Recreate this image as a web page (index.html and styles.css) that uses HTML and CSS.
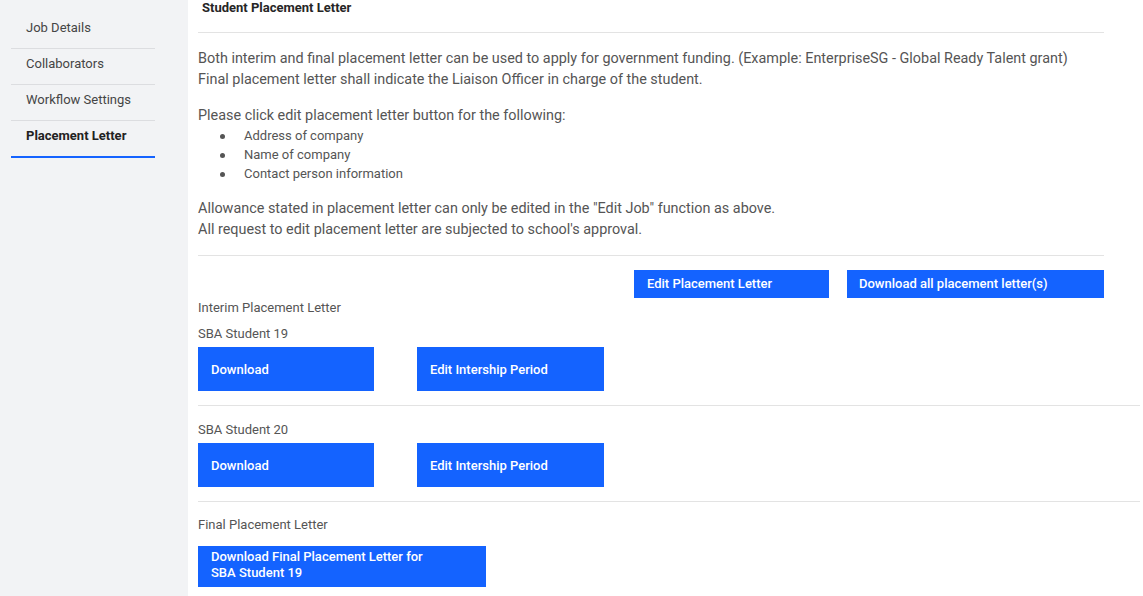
FILE: index.html
```html
<!DOCTYPE html>
<html lang="en">
<head>
<meta charset="utf-8">
<title>Student Placement Letter</title>
<link rel="stylesheet" href="styles.css">
</head>
<body>
<div class="layout">
  <aside class="sidebar">
    <nav class="nav">
      <a class="nav-item">Job Details</a>
      <a class="nav-item">Collaborators</a>
      <a class="nav-item">Workflow Settings</a>
      <a class="nav-item active">Placement Letter</a>
    </nav>
  </aside>
  <main class="main">
    <div class="page-title">Student Placement Letter</div>
    <section class="intro">
      <p class="para">Both interim and final placement letter can be used to apply for government funding. (Example: EnterpriseSG - Global Ready Talent grant)<br>Final placement letter shall indicate the Liaison Officer in charge of the student.</p>
      <p class="para">Please click edit placement letter button for the following:</p>
      <ul class="bullets">
        <li>Address of company</li>
        <li>Name of company</li>
        <li>Contact person information</li>
      </ul>
      <p class="para">Allowance stated in placement letter can only be edited in the "Edit Job" function as above.<br>All request to edit placement letter are subjected to school's approval.</p>
    </section>
    <div class="actions">
      <button class="btn btn-sm btn-edit">Edit Placement Letter</button>
      <button class="btn btn-sm btn-all">Download all placement letter(s)</button>
    </div>
    <div class="label label-interim">Interim Placement Letter</div>
    <section class="student">
      <div class="label">SBA Student 19</div>
      <div class="student-actions">
        <button class="btn btn-lg btn-dl">Download</button>
        <button class="btn btn-lg btn-period">Edit Intership Period</button>
      </div>
    </section>
    <section class="student">
      <div class="label label-first">SBA Student 20</div>
      <div class="student-actions">
        <button class="btn btn-lg btn-dl">Download</button>
        <button class="btn btn-lg btn-period">Edit Intership Period</button>
      </div>
    </section>
    <section class="final">
      <div class="label">Final Placement Letter</div>
      <button class="btn btn-final">Download Final Placement Letter for SBA Student 19</button>
    </section>
  </main>
</div>
</body>
</html>
```

FILE: styles.css
```css
html, body {
  margin: 0;
  padding: 0;
  height: 100%;
  overflow: hidden;
  background: #ffffff;
  font-family: Roboto, "Liberation Sans", Arial, sans-serif;
}

.layout {
  display: flex;
  min-height: 100%;
}

.sidebar {
  width: 188px;
  flex: 0 0 188px;
  background: #f2f3f5;
  padding: 13px 33px 0 11px;
  box-sizing: border-box;
}

.nav {
  display: flex;
  flex-direction: column;
}

.nav-item {
  display: block;
  padding: 7px 15px 12px;
  font-size: 13px;
  line-height: 16px;
  color: #454545;
  border-bottom: 1px solid #dcdde0;
}

.nav-item.active {
  font-weight: 700;
  color: #222222;
  border-bottom: 2px solid #1463ff;
}

.main {
  flex: 1;
  padding: 0 3px 0 10px;
  min-width: 0;
}

.page-title {
  margin-right: 36px;
  padding: 0 0 17px 4px;
  font-size: 13px;
  line-height: 15px;
  font-weight: 700;
  color: #262626;
  border-bottom: 1px solid #e3e3e3;
}

.intro {
  margin-right: 36px;
  padding-bottom: 15px;
  border-bottom: 1px solid #e3e3e3;
}

.para {
  margin: 15px 0 0;
  font-size: 14.4px;
  line-height: 21px;
  color: #555555;
}

.para + .para {
  margin-top: 15px;
}

.bullets + .para {
  margin-top: 15px;
}

.bullets {
  margin: 0;
  padding: 0 0 0 46px;
  list-style: none;
}

.bullets li {
  position: relative;
  font-size: 13px;
  line-height: 19px;
  color: #555555;
}

.bullets li::before {
  content: "";
  position: absolute;
  left: -24px;
  top: 8px;
  width: 5px;
  height: 5px;
  border-radius: 50%;
  background: #555555;
}

.actions {
  display: flex;
  justify-content: flex-end;
  gap: 18px;
  margin: 14px 36px 0 0;
}

.btn {
  display: block;
  border: 0;
  border-radius: 0;
  background: #1463ff;
  color: #ffffff;
  font-family: inherit;
  font-size: 13px;
  font-weight: 500;
  text-align: left;
  cursor: pointer;
}

.btn-sm {
  height: 28px;
  line-height: 28px;
  padding: 0 13px;
}

.btn-edit {
  width: 195px;
}

.btn-all {
  width: 257px;
  padding-left: 12px;
}

.label {
  font-size: 13px;
  line-height: 16px;
  color: #555555;
  margin-top: 10px;
}

.label-interim {
  margin-top: 2px;
}

.label-first {
  margin-top: 16px;
}

.student {
  padding-bottom: 14px;
  border-bottom: 1px solid #e3e3e3;
}

.student-actions {
  display: flex;
  gap: 43px;
  margin-top: 5px;
}

.btn-lg {
  height: 44px;
  padding: 0 13px;
}

.btn-dl {
  width: 176px;
}

.btn-period {
  width: 187px;
}

.final .label {
  margin-top: 15px;
}

.btn-final {
  width: 288px;
  margin-top: 13px;
  padding: 3px 55px 6px 13px;
  line-height: 16px;
}
```
